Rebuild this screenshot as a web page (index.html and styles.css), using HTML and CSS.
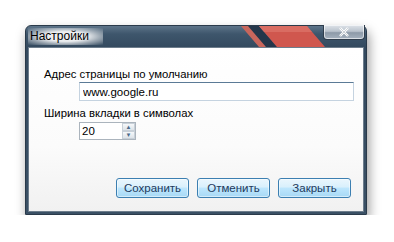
FILE: index.html
```html
<!DOCTYPE html>
<html lang="ru">
<head>
    <meta charset="UTF-8">
    <title>Настройки</title>
    <link rel="stylesheet" href="styles.css">
</head>
<body>
    <div class="window">
        <div class="titlebar">
            <span class="title">Настройки</span>
            <svg class="stripes" width="88" height="21" viewBox="0 0 88 21">
                <polygon points="0,0 8,0 26,21 18,21" fill="#c8665c"/>
                <polygon points="7,0 18,0 36,21 25,21" fill="#24364a"/>
                <polygon points="18,0 66,0 84,21 36,21" fill="#d0574e"/>
                <polygon points="18,0 66,0 71,6 23,6" fill="#e07a70" opacity="0.6"/>
            </svg>
            <div class="close">
                <svg width="14" height="10" viewBox="0 0 14 10">
                    <path d="M3 1 L11 9 M11 1 L3 9" stroke="#fff" stroke-width="2.4"/>
                    <path d="M3 1 L11 9 M11 1 L3 9" stroke="#5b6b7b" stroke-width="0.6" opacity="0.5"/>
                </svg>
            </div>
        </div>
        <div class="content">
            <label class="label" for="homepage">Адрес страницы по умолчанию</label>
            <input class="field" type="text" id="homepage" value="www.google.ru">
            <label class="label label-second" for="tabwidth">Ширина вкладки в символах</label>
            <div class="spinner">
                <input class="spin-value" type="text" id="tabwidth" value="20">
                <div class="spin-buttons">
                    <span class="spin-btn">&#9650;</span>
                    <span class="spin-btn">&#9660;</span>
                </div>
            </div>
            <div class="buttons">
                <button class="btn">Сохранить</button>
                <button class="btn">Отменить</button>
                <button class="btn">Закрыть</button>
            </div>
        </div>
    </div>
</body>
</html>
```

FILE: styles.css
```css
body {
    margin: 0;
    background-color: #fff;
    font-family: "Liberation Sans", Arial, sans-serif;
    font-size: 11.3px;
}
.window {
    margin: 25px 0 0 25px;
    width: 342px;
    padding: 0 2px 2px 2px;
    box-sizing: border-box;
    border-radius: 6px 6px 0 0;
    background: linear-gradient(#5d7489 0px, #3e566c 8px, #33495e 22px, #3a5065 100%);
    border: 1px solid #2a3a4a;
    box-shadow: 2px 6px 12px rgba(0, 0, 0, 0.4);
}
.titlebar {
    position: relative;
    height: 21px;
    display: flex;
    align-items: center;
}
.title {
    color: #000;
    font-size: 12px;
    padding: 0 14px 0 2px;
    background: radial-gradient(ellipse at center, rgba(255,255,255,0.9) 40%, rgba(255,255,255,0.5) 65%, rgba(255,255,255,0) 100%);
    line-height: 17px;
}
.stripes {
    position: absolute;
    left: 213px;
    top: 0;
}
.close {
    position: absolute;
    right: -1px;
    top: -1px;
    width: 42px;
    height: 15px;
    box-sizing: border-box;
    border: 1px solid #2f3d4c;
    border-top: none;
    border-radius: 0 0 4px 4px;
    background: linear-gradient(#dfe4ea 0%, #b9c2cc 45%, #8d9aa8 55%, #a6b2bf 100%);
    box-shadow: inset 0 0 0 1px rgba(255,255,255,0.6);
    display: flex;
    align-items: center;
    justify-content: center;
}
.content {
    height: 165px;
    box-sizing: border-box;
    background: linear-gradient(#ffffff 0%, #fbfbfb 60%, #f1f1f1 100%);
    border: 1px solid #6d7d8c;
    display: flex;
    flex-direction: column;
    padding: 19px 12px 13px 15px;
}
.label {
    display: block;
    color: #000;
    line-height: 14px;
}
.label-second {
    margin-top: 5px;
}
.field {
    margin: 1px 0 0 35px;
    width: 275px;
    height: 19px;
    box-sizing: border-box;
    border: 1px solid #c5d3e0;
    border-top-color: #5b7a96;
    padding: 0 3px;
    font-family: "Liberation Sans", Arial, sans-serif;
    font-size: 11.5px;
    color: #000;
    background: #fff;
    outline: none;
}
.spinner {
    margin: 2px 0 0 35px;
    width: 57px;
    height: 18px;
    box-sizing: border-box;
    border: 1px solid #abb4bd;
    display: flex;
    background: #fff;
}
.spin-value {
    flex: 1;
    width: 0;
    border: none;
    padding: 0 2px;
    font-family: "Liberation Sans", Arial, sans-serif;
    font-size: 11.5px;
    outline: none;
    background: transparent;
}
.spin-buttons {
    width: 13px;
    display: flex;
    flex-direction: column;
}
.spin-btn {
    flex: 1;
    font-size: 6px;
    color: #4d6a8a;
    display: flex;
    align-items: center;
    justify-content: center;
    border: 1px solid #c8d0d8;
    background: linear-gradient(#f6f8fa, #dde3e9);
}
.buttons {
    margin-top: auto;
    display: flex;
    justify-content: flex-end;
    gap: 8px;
}
.btn {
    width: 73px;
    height: 20px;
    padding: 0;
    border: 1px solid #3c7fb1;
    border-radius: 3px;
    background: linear-gradient(#eaf6fd 0%, #d9f0fc 45%, #bee6fd 50%, #a7d9f5 100%);
    box-shadow: inset 0 0 0 1px rgba(255,255,255,0.5);
    font-family: "Liberation Sans", Arial, sans-serif;
    font-size: 11.5px;
    color: #1e3a5c;
}
```
